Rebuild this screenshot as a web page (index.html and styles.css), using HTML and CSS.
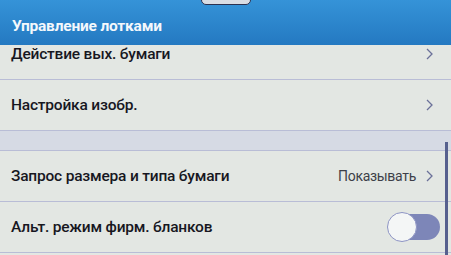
FILE: index.html
```html
<!DOCTYPE html>
<html lang="ru">
<head>
<meta charset="utf-8">
<link rel="stylesheet" href="styles.css">
</head>
<body>
<div class="screen">
  <header class="header">
    <div class="handle"></div>
    <h1 class="title">Управление лотками</h1>
  </header>
  <div class="viewport">
    <div class="list">
      <div class="row"><span class="label">Действие вых. бумаги</span><span class="chev"><svg width="7" height="12" viewBox="0 0 7 12"><path d="M1 1 L6 6 L1 11" fill="none" stroke="#6b7199" stroke-width="1.3"/></svg></span></div>
      <div class="row"><span class="label">Настройка изобр.</span><span class="chev"><svg width="7" height="12" viewBox="0 0 7 12"><path d="M1 1 L6 6 L1 11" fill="none" stroke="#6b7199" stroke-width="1.3"/></svg></span></div>
      <div class="band"></div>
      <div class="row"><span class="label">Запрос размера и типа бумаги</span><span class="value">Показывать</span><span class="chev"><svg width="7" height="12" viewBox="0 0 7 12"><path d="M1 1 L6 6 L1 11" fill="none" stroke="#6b7199" stroke-width="1.3"/></svg></span></div>
      <div class="row"><span class="label">Альт. режим фирм. бланков</span><span class="toggle"><span class="knob"></span></span></div>
    </div>
    <div class="scrollbar"></div>
  </div>
</div>
</body>
</html>
```

FILE: styles.css
```css
* { box-sizing: border-box; }
html, body { margin: 0; padding: 0; }
body {
  width: 451px;
  height: 255px;
  overflow: hidden;
  background: #e3e7e3;
  font-family: Roboto, "Open Sans", sans-serif;
}
.screen { width: 451px; height: 255px; position: relative; overflow: hidden; }
.header {
  height: 45px;
  background: linear-gradient(#3593d8, #2479c1);
  position: relative;
  z-index: 2;
  padding: 0 12px;
  display: flex;
  align-items: center;
}
.handle {
  position: absolute;
  left: 201px;
  top: -3px;
  width: 50px;
  height: 8px;
  background: #d9dde4;
  border: 1.5px solid #2b3150;
  border-radius: 0 0 5px 5px;
}
.title {
  margin: 7px 0 0;
  font-size: 15.5px;
  font-weight: 700;
  letter-spacing: -0.2px;
  color: #f4f8fc;
}
.viewport {
  height: 210px;
  overflow: hidden;
  position: relative;
}
.list { margin-top: -16px; }
.row {
  height: 51px;
  border-bottom: 1px solid #b9bdd6;
  display: flex;
  align-items: center;
  padding: 0 17px 0 11px;
}
.label {
  flex: 1;
  font-size: 15.5px;
  font-weight: 500;
  letter-spacing: -0.2px;
  color: #17171f;
}
.value {
  font-size: 14px;
  color: #3d3f48;
  letter-spacing: -0.3px;
  margin-right: 10px;
}
.chev { display: flex; align-items: center; margin-right: 1px; }
.band {
  height: 20px;
  background: #d6dae4;
  border-bottom: 1px solid #b9bdd6;
}
.toggle {
  width: 52px;
  height: 26px;
  border-radius: 13px;
  background: #7d86b8;
  position: relative;
  margin-right: -6px;
}
.knob {
  position: absolute;
  left: -1px;
  top: -2px;
  width: 30px;
  height: 30px;
  border-radius: 50%;
  background: #f4f6f6;
  border: 1.5px solid #8d94c4;
}
.scrollbar {
  position: absolute;
  left: 445px;
  top: 97px;
  width: 3px;
  height: 120px;
  background: #56608e;
}
```
